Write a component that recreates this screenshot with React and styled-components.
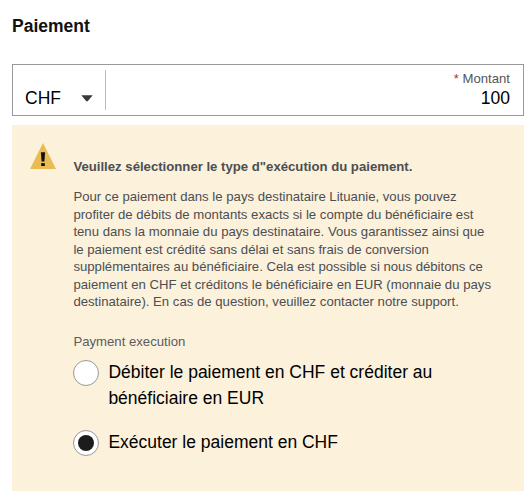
import React, { useState } from 'react';
import styled, { createGlobalStyle } from 'styled-components';

function App() {
    const [execution, setExecution] = useState('chf');

    return (
        <Page>
            <GlobalStyle />
            <Title>Paiement</Title>
            <AmountField>
                <Currency>
                    CHF
                    <Caret viewBox="0 0 12 7">
                        <path d="M0.3 0.3H11.7L6.9 6.1Q6 7 5.1 6.1Z" fill="#3a3a3a" />
                    </Caret>
                </Currency>
                <Amount>
                    <AmountLabel><Required>*</Required> Montant</AmountLabel>
                    <AmountValue>100</AmountValue>
                </Amount>
            </AmountField>
            <Notice>
                <WarningIcon viewBox="0 0 26 26">
                    <path d="M13 0L26 26H0Z" fill="#e9bb55" />
                    <path d="M10.9 9.3H15.1L14.4 18.6H11.6Z" fill="#111" />
                    <rect x="11.2" y="20.1" width="3.6" height="2.9" fill="#111" />
                </WarningIcon>
                <NoticeBody>
                    <Heading>Veuillez sélectionner le type d"exécution du paiement.</Heading>
                    <Para>
                        Pour ce paiement dans le pays destinataire Lituanie, vous pouvez<br />
                        profiter de débits de montants exacts si le compte du bénéficiaire est<br />
                        tenu dans la monnaie du pays destinataire. Vous garantissez ainsi que<br />
                        le paiement est crédité sans délai et sans frais de conversion<br />
                        supplémentaires au bénéficiaire. Cela est possible si nous débitons ce<br />
                        paiement en CHF et créditons le bénéficiaire en EUR (monnaie du pays<br />
                        destinataire). En cas de question, veuillez contacter notre support.
                    </Para>
                    <GroupLabel>Payment execution</GroupLabel>
                    <Option>
                        <Radio
                            name="execution"
                            checked={execution === 'eur'}
                            onChange={() => setExecution('eur')}
                        />
                        <OptionText>
                            Débiter le paiement en CHF et créditer au<br />
                            bénéficiaire en EUR
                        </OptionText>
                    </Option>
                    <Option>
                        <Radio
                            name="execution"
                            checked={execution === 'chf'}
                            onChange={() => setExecution('chf')}
                        />
                        <OptionText>Exécuter le paiement en CHF</OptionText>
                    </Option>
                </NoticeBody>
            </Notice>
        </Page>
    )
}

export default App


const GlobalStyle = createGlobalStyle`
    * {
        box-sizing: border-box;
    }

    body {
        margin: 0;
        background: #fff;
        font-family: "Liberation Sans", Arial, sans-serif;
    }
`

const Page = styled.div`
    width: 532px;
    height: 500px;
    padding: 13px 8px 0 12px;
    color: #111;
`

const Title = styled.h1`
    margin: 0 0 25px;
    font-size: 17.5px;
    font-weight: 700;
    line-height: 26px;
`

const AmountField = styled.div`
    display: flex;
    height: 52px;
    border: 1px solid #999;
`

const Currency = styled.div`
    display: flex;
    justify-content: space-between;
    width: 93px;
    margin: 5px 0;
    padding: 15px 12.5px 0 12px;
    border-right: 1px solid #bbb;
    color: #000;
    font-size: 17.5px;
    line-height: 26px;
`

const Caret = styled.svg`
    width: 12px;
    height: 7px;
    margin-top: 10px;
`

const Amount = styled.div`
    flex: 1;
    padding: 5px 13px 0 0;
    text-align: right;
`

const AmountLabel = styled.div`
    color: #555;
    font-size: 13.15px;
    line-height: 18px;
`

const Required = styled.span`
    color: #a8322a;
`

const AmountValue = styled.div`
    color: #000;
    font-size: 17.5px;
    line-height: 20px;
`

const Notice = styled.section`
    display: flex;
    height: 366px;
    margin-top: 9px;
    padding: 18px 18px 0;
    background: #fcf1db;
`

const WarningIcon = styled.svg`
    flex: none;
    width: 26px;
    height: 26px;
`

const NoticeBody = styled.div`
    margin-left: 17.4px;
    padding-top: 15px;
    white-space: nowrap;
`

const Heading = styled.h2`
    margin: 0;
    color: #4c4e52;
    font-size: 13.17px;
    font-weight: 700;
    line-height: 17.5px;
`

const Para = styled.p`
    margin: 12.6px 0 0;
    color: #4c4e52;
    font-size: 13.17px;
    line-height: 17.5px;
`

const GroupLabel = styled.div`
    margin: 22.4px 0 8.5px;
    color: #5a5c60;
    font-size: 13.17px;
    line-height: 17.5px;
`

const Option = styled.label`
    display: flex;
    gap: 9px;

    & + & {
        margin-top: 17.5px;
    }
`

const Radio = styled.input.attrs({ type: 'radio' })`
    display: grid;
    flex: none;
    place-items: center;
    width: 26px;
    height: 26px;
    margin: 1.2px 0 0;
    appearance: none;
    border: 1px solid #999;
    border-radius: 50%;
    background: #fff;

    &:checked::before {
        content: "";
        width: 16px;
        height: 16px;
        border-radius: 50%;
        background: #1c1c1c;
    }
`

const OptionText = styled.span`
    color: #000;
    font-size: 17.5px;
    line-height: 26.25px;
`
